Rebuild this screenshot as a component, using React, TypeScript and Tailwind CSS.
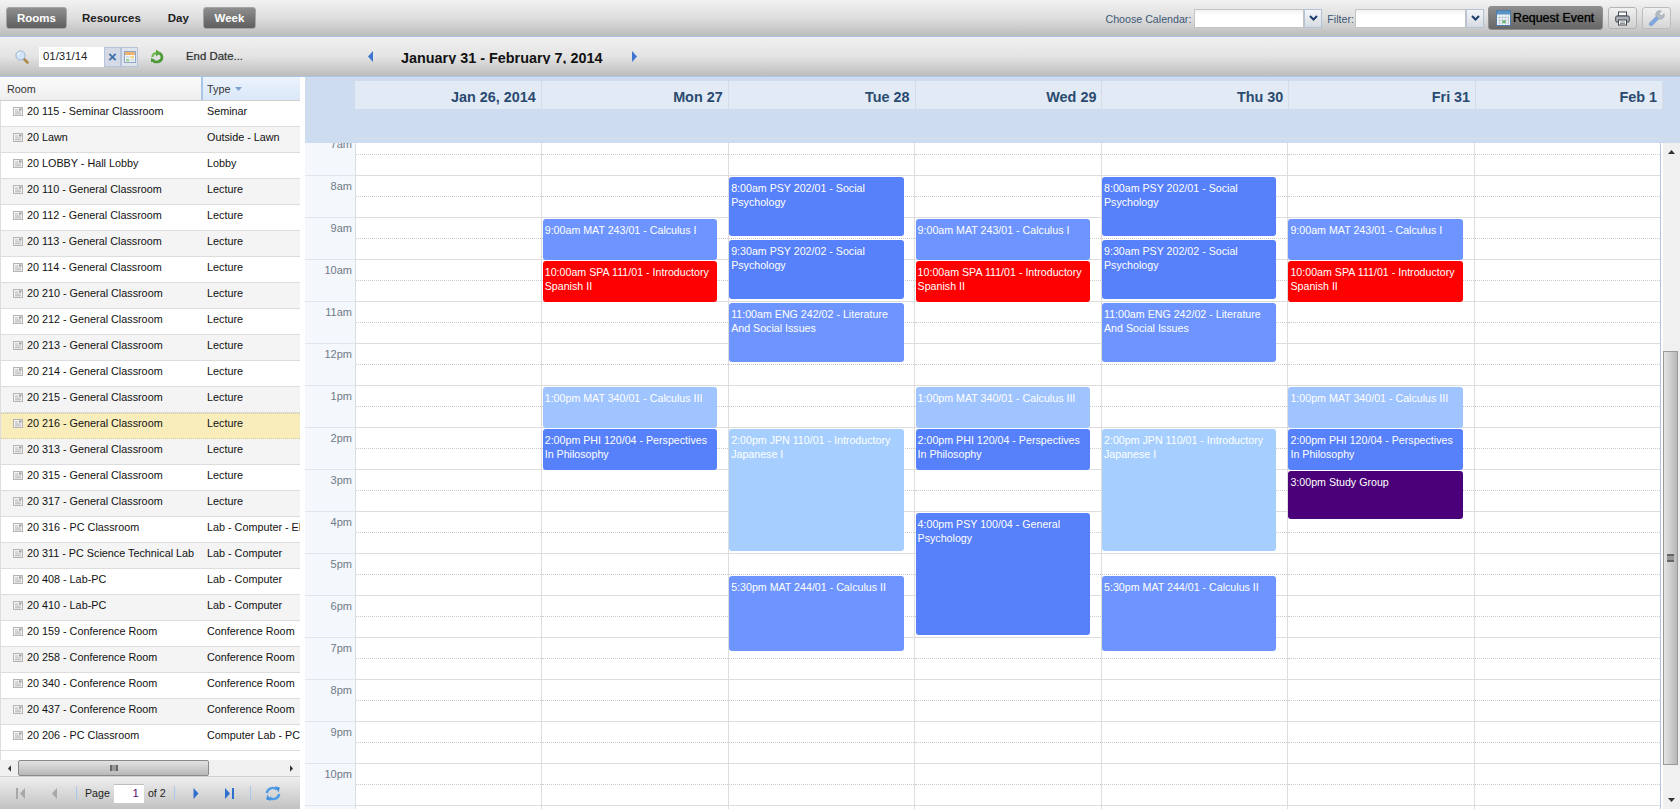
import React from "react";

type Tone = "mid" | "blue" | "red" | "sky" | "pale" | "purple";

type CalEvent = {
  start: number;
  end: number;
  label: string;
  tone: Tone;
};

const toneClass: Record<Tone, string> = {
  mid: "bg-[#6e95ff]",
  blue: "bg-[#5780fb]",
  red: "bg-[#ff0000]",
  sky: "bg-[#a0c4ff]",
  pale: "bg-[#a6cfff]",
  purple: "bg-[#4a0078]",
};

const rooms: [string, string][] = [
  ["20 115 - Seminar Classroom", "Seminar"],
  ["20 Lawn", "Outside - Lawn"],
  ["20 LOBBY - Hall Lobby", "Lobby"],
  ["20 110 - General Classroom", "Lecture"],
  ["20 112 - General Classroom", "Lecture"],
  ["20 113 - General Classroom", "Lecture"],
  ["20 114 - General Classroom", "Lecture"],
  ["20 210 - General Classroom", "Lecture"],
  ["20 212 - General Classroom", "Lecture"],
  ["20 213 - General Classroom", "Lecture"],
  ["20 214 - General Classroom", "Lecture"],
  ["20 215 - General Classroom", "Lecture"],
  ["20 216 - General Classroom", "Lecture"],
  ["20 313 - General Classroom", "Lecture"],
  ["20 315 - General Classroom", "Lecture"],
  ["20 317 - General Classroom", "Lecture"],
  ["20 316 - PC Classroom", "Lab - Computer - EN"],
  ["20 311 - PC Science Technical Lab", "Lab - Computer"],
  ["20 408 - Lab-PC", "Lab - Computer"],
  ["20 410 - Lab-PC", "Lab - Computer"],
  ["20 159 - Conference Room", "Conference Room"],
  ["20 258 - Conference Room", "Conference Room"],
  ["20 340 - Conference Room", "Conference Room"],
  ["20 437 - Conference Room", "Conference Room"],
  ["20 206 - PC Classroom", "Computer Lab - PC"],
];

const hours = ["7am", "8am", "9am", "10am", "11am", "12pm", "1pm", "2pm", "3pm", "4pm", "5pm", "6pm", "7pm", "8pm", "9pm", "10pm", "11pm"];
const dayHeads = ["Jan 26, 2014", "Mon 27", "Tue 28", "Wed 29", "Thu 30", "Fri 31", "Feb 1"];

// pixel tops/bottoms are relative to the first grid row (7am)
const calc1: CalEvent = { start: 85, end: 126, label: "9:00am MAT 243/01 - Calculus I", tone: "mid" };
const spa: CalEvent = { start: 127, end: 168, label: "10:00am SPA 111/01 - Introductory Spanish II", tone: "red" };
const calc3: CalEvent = { start: 253, end: 294, label: "1:00pm MAT 340/01 - Calculus III", tone: "sky" };
const phi: CalEvent = { start: 295, end: 336, label: "2:00pm PHI 120/04 - Perspectives In Philosophy", tone: "blue" };

const tueThu: CalEvent[] = [
  { start: 43, end: 102, label: "8:00am PSY 202/01 - Social Psychology", tone: "blue" },
  { start: 106, end: 165, label: "9:30am PSY 202/02 - Social Psychology", tone: "blue" },
  { start: 169, end: 228, label: "11:00am ENG 242/02 - Literature And Social Issues", tone: "mid" },
  { start: 295, end: 417, label: "2:00pm JPN 110/01 - Introductory Japanese I", tone: "pale" },
  { start: 442, end: 517, label: "5:30pm MAT 244/01 - Calculus II", tone: "mid" },
];

const dayEvents: CalEvent[][] = [
  [],
  [calc1, spa, calc3, phi],
  tueThu,
  [calc1, spa, calc3, phi, { start: 379, end: 501, label: "4:00pm PSY 100/04 - General Psychology", tone: "blue" }],
  tueThu,
  [calc1, spa, calc3, phi, { start: 337, end: 385, label: "3:00pm Study Group", tone: "purple" }],
  [],
];

function SearchIcon() {
  return (
    <svg width="14" height="14" viewBox="0 0 14 14">
      <path d="M8.500 8.500l4 4" stroke="#b08a4c" strokeWidth="2.600" strokeLinecap="round" />
      <circle cx="5.500" cy="5.500" r="4.600" fill="#d3e4f8" stroke="#9db4d0" />
      <path d="M2.800 5a3 3 0 0 1 2.500-2.400" stroke="#fff" fill="none" />
    </svg>
  );
}

function CalendarSmall() {
  return (
    <svg width="12" height="12" viewBox="0 0 12 12">
      <rect x="0.500" y="0.500" width="11" height="11" fill="#f6f8fb" stroke="#8aa6c8" />
      <rect x="1" y="1" width="10" height="3" fill="#f0b26a" />
      <rect x="2" y="5" width="3.500" height="2.500" fill="#d4dfeb" />
      <rect x="6.500" y="5" width="3.500" height="2.500" fill="#f2d58a" />
      <rect x="2" y="8" width="3.500" height="2.500" fill="#a8d296" />
      <rect x="6.500" y="8" width="3.500" height="2.500" fill="#d4dfeb" />
    </svg>
  );
}

function RefreshGreen() {
  return (
    <svg width="14" height="15" viewBox="0 0 14 15" fill="none">
      <path d="M2.400 10.500A5.200 5.200 0 0 0 12 8.500 5 5 0 0 0 9 4" stroke="#4c9a38" strokeWidth="2.600" />
      <path d="M2.500 8a4 4 0 0 1 4-4" stroke="#76bb58" strokeWidth="2.400" />
      <path d="M6 0.500l5 3.500-5 3.500z" fill="#5aa842" />
      <path d="M1 13.500l3-3-3-1.500z" fill="#4c9a38" />
    </svg>
  );
}

function RequestIcon() {
  return (
    <svg width="15" height="16" viewBox="0 0 15 16">
      <rect x="0.500" y="0.500" width="14" height="15" fill="#eef3f7" stroke="#4f7ba6" />
      <rect x="1" y="1" width="13" height="3.500" fill="#5b93c6" />
      <path d="M3.500 5.500v9M6.500 5.500v9M9.500 5.500v9M12.500 5.500v9M2 7.500h11M2 10.500h11M2 13h11" stroke="#bcc6d0" strokeWidth="0.800" />
      <rect x="6.500" y="10.500" width="3" height="2.500" fill="#58b858" />
    </svg>
  );
}

function PrinterIcon() {
  return (
    <svg width="15" height="15" viewBox="0 0 15 15" fill="none">
      <rect x="3.500" y="1" width="8" height="4" fill="#fff" stroke="#3f4750" />
      <rect x="0.700" y="5" width="13.600" height="6" rx="1.200" fill="#aab0b6" stroke="#3f4750" />
      <rect x="3.500" y="9" width="8" height="5" fill="#fff" stroke="#3f4750" />
      <path d="M5 11h5M5 12.500h5" stroke="#8a8f95" />
    </svg>
  );
}

function WrenchIcon() {
  return (
    <svg width="17" height="17" viewBox="0 0 17 17">
      <path d="M8.800 5.800L1.600 13a1.800 1.800 0 0 0 2.500 2.500l7.200-7.200z" fill="#7fa8e0" stroke="#6f93c4" strokeWidth="0.600" />
      <path d="M8.200 6.500A4 4 0 0 1 13.500 1L11.200 3.300l.6 2 2 .6L16 3.600a4 4 0 0 1-5.400 5.200z" fill="#b4bcc6" stroke="#98a2ae" strokeWidth="0.600" />
    </svg>
  );
}

function RefreshBlue() {
  return (
    <svg width="16" height="15" viewBox="0 0 16 15" fill="none">
      <path d="M1.800 7A5.800 5.800 0 0 1 11.500 3.500" stroke="#4c9ce8" strokeWidth="2.400" />
      <path d="M9.800 0.300l5 1.200-1.200 5z" fill="#3f8fe0" />
      <path d="M14.200 8A5.800 5.800 0 0 1 4.500 11.500" stroke="#4c9ce8" strokeWidth="2.400" />
      <path d="M6.200 14.700l-5-1.200 1.200-5z" fill="#3f8fe0" />
    </svg>
  );
}

function RoomIcon() {
  return (
    <svg width="10" height="9" viewBox="0 0 10 9" className="shrink-0">
      <rect x="0.500" y="0.500" width="9" height="8" fill="#f4f4f4" stroke="#b4b4b4" />
      <path d="M2 3h3M2 5h6M2 6.800h6" stroke="#b4b4b4" />
      <rect x="6" y="1.500" width="2.500" height="2" fill="#9a9a9a" />
    </svg>
  );
}

function Tri({ dir, color, w = 5, h = 11 }: { dir: "l" | "r"; color: string; w?: number; h?: number }) {
  return (
    <svg width={w} height={h} viewBox="0 0 5 11">
      <path d={dir === "l" ? "M5 0v11L0 5.500z" : "M0 0v11l5-5.500z"} fill={color} />
    </svg>
  );
}

function ComboBox({ width }: { width: string }) {
  return (
    <div className="flex h-[19px]">
      <div className={`${width} border border-[#c4c4c4] bg-gradient-to-b from-[#f1f1f1] to-white to-30%`} />
      <div className="flex w-[18px] items-center justify-center border border-[#b4c2d6] bg-gradient-to-b from-[#f4f6f9] to-[#d6dbe2]">
        <svg width="9" height="6" viewBox="0 0 9 6">
          <path d="M1 1l3.500 3.500L8 1" stroke="#1c3f6e" strokeWidth="2" fill="none" />
        </svg>
      </div>
    </div>
  );
}

function TopBar() {
  return (
    <div className="flex h-[37px] items-center border-b border-[#a9c4e8] bg-gradient-to-b from-[#f2f2f2] via-[#dedede] to-[#bcbcbc] pl-[6px] pr-[9px] text-[11.5px]">
      <button className="h-[22px] w-[61px] rounded-[3px] border border-[#a4a4a4] bg-gradient-to-b from-[#8e8e8e] to-[#5f5f5f] pt-px font-bold text-white">Rooms</button>
      <span className="ml-[15px] pt-px font-bold text-[#222]">Resources</span>
      <span className="ml-[27px] pt-px font-bold text-[#222]">Day</span>
      <button className="ml-[14px] h-[22px] w-[53px] rounded-[3px] border border-[#a4a4a4] bg-gradient-to-b from-[#8e8e8e] to-[#5f5f5f] pt-px font-bold text-white">Week</button>
      <div className="flex-1" />
      <span className="pt-px text-[10.67px] text-[#3d5875]">Choose Calendar:</span>
      <div className="ml-[3px]"><ComboBox width="w-[110px]" /></div>
      <span className="ml-[5px] pt-px text-[10.67px] text-[#3d5875]">Filter:</span>
      <div className="ml-[1px]"><ComboBox width="w-[111px]" /></div>
      <button className="ml-[4px] flex h-[24px] w-[115px] items-center gap-[2px] rounded-[3px] border border-[#8d8d8d] bg-gradient-to-b from-[#8e8e8e] to-[#666] pl-[7px] text-[12.4px] text-black [text-shadow:0_0_1px_rgba(0,0,0,0.7)]">
        <RequestIcon />
        Request Event
      </button>
      <button className="ml-[5px] flex h-[22px] w-[29px] items-center justify-center rounded-[3px] border border-[#b4b4b4] bg-gradient-to-b from-[#f0f0f0] to-[#d0d0d0]">
        <PrinterIcon />
      </button>
      <button className="ml-[5px] flex h-[22px] w-[29px] items-center justify-center rounded-[3px] border border-[#bcbcbc] bg-gradient-to-b from-[#f0f0f0] to-[#d6d6d6]">
        <WrenchIcon />
      </button>
    </div>
  );
}

function DateBar() {
  return (
    <div className="flex h-[40px] items-center border-b border-[#a9c4e8] bg-gradient-to-b from-[#f0f0f0] via-[#e4e4e4] to-[#bcbcbc] pl-[15px] text-[11px]">
      <SearchIcon />
      <div className="ml-[10px] flex h-[20px]">
        <div className="flex w-[65px] items-center bg-white pl-[4px] text-[11.4px] text-[#222]">01/31/14</div>
        <div className="flex w-[17px] items-center justify-center border border-[#b6c4da] bg-[#d4dbe6] text-[15px] font-bold leading-none text-[#3a6ea8]">×</div>
        <div className="flex w-[17px] items-center justify-center border border-[#b6c4da] bg-[#dfe4ec]"><CalendarSmall /></div>
      </div>
      <div className="ml-[12px]"><RefreshGreen /></div>
      <span className="ml-[22px] pt-px text-[11.4px] text-[#333] [text-shadow:0_0_1px_rgba(0,0,0,0.4)]">End Date...</span>
      <div className="ml-[125px]"><Tri dir="l" color="#3f74d0" /></div>
      <div className="ml-[28px] h-[15px] overflow-hidden text-[14.4px] font-bold leading-[19px] text-[#111]">January 31 - February 7, 2014</div>
      <div className="ml-[29px]"><Tri dir="r" color="#3f74d0" /></div>
    </div>
  );
}

function RoomList() {
  return (
    <div className="flex w-[300px] shrink-0 flex-col bg-white text-[10.8px] text-[#111]">
      <div className="flex h-[24px] shrink-0 border-b border-[#cfcfcf]">
        <div className="flex w-[201px] items-center bg-gradient-to-b from-[#fbfbfb] to-[#eeeeee] pl-[7px] pt-px text-[#333]">Room</div>
        <div className="flex flex-1 items-center gap-[5px] border-l-2 border-[#a9c5e8] bg-gradient-to-b from-[#ebf3fd] to-[#dbe8f9] pl-[4px] pt-px text-[#333]">
          Type
          <svg width="7" height="4" viewBox="0 0 7 4">
            <path d="M0 0h7L3.500 4z" fill="#7da2d1" />
          </svg>
        </div>
      </div>
      <div className="flex-1 overflow-hidden border-l border-[#dddddd]">
        {rooms.map(([name, type], i) => (
          <div
            key={name}
            className={`flex h-[26px] items-center ${i === 12 ? "border-y border-dotted border-[#cfc9a0] bg-[#f8edbb] pb-[5px]" : i % 2 === 1 ? "border-b border-[#dddddd] bg-[#f4f4f4] pb-[4px]" : "border-b border-[#dddddd] bg-white pb-[4px]"}`}
          >
            <div className="flex w-[206px] shrink-0 items-center gap-[4px] pl-[12px]">
              <RoomIcon />
              <span className="whitespace-nowrap">{name}</span>
            </div>
            <span className="overflow-hidden whitespace-nowrap pr-[3px]">{type}</span>
          </div>
        ))}
      </div>
      <div className="flex h-[16px] shrink-0 items-center bg-[#f0f0f0]">
        <div className="flex w-[18px] justify-center"><Tri dir="l" color="#333" w={3} h={7} /></div>
        <div className="flex h-[16px] w-[191px] items-center justify-center rounded-[2px] border border-[#8a8a8a] bg-gradient-to-b from-[#e2e2e2] to-[#b8b8b8]">
          <div className="h-[6px] w-[8px] border-x-2 border-[#666] bg-[#999]" />
        </div>
        <div className="flex-1" />
        <div className="mr-[7px]"><Tri dir="r" color="#333" w={3} h={7} /></div>
      </div>
      <div className="flex h-[33px] shrink-0 items-center border-t border-[#d0d0d0] bg-gradient-to-b from-[#efefef] to-[#c2c2c2] text-[10.67px] text-[#222]">
        <div className="ml-[16px] flex items-center">
          <div className="mr-px h-[11px] w-[2px] bg-[#a8a8a8]" />
          <Tri dir="l" color="#a8a8a8" w={7} h={11} />
        </div>
        <div className="ml-[26px]"><Tri dir="l" color="#a8a8a8" w={5} h={11} /></div>
        <div className="ml-[19px] h-[14px] w-px bg-[#a9c8ee]" />
        <span className="ml-[8px]">Page</span>
        <div className="ml-[4px] flex h-[19px] w-[30px] items-center justify-end border-t border-[#bdbdbd] bg-white pr-[5px] text-[11.4px] text-[#5c0a6e]">1</div>
        <span className="ml-[4px]">of 2</span>
        <div className="ml-[8px] h-[14px] w-px bg-[#a9c8ee]" />
        <div className="ml-[18px]"><Tri dir="r" color="#2f6fd0" w={6} h={11} /></div>
        <div className="ml-[25px] flex items-center">
          <Tri dir="r" color="#2f6fd0" w={7} h={11} />
          <div className="ml-px h-[11px] w-[2px] bg-[#2f6fd0]" />
        </div>
        <div className="ml-[16px] h-[14px] w-px bg-[#a9c8ee]" />
        <div className="ml-[14px]"><RefreshBlue /></div>
      </div>
    </div>
  );
}

function DayColumn({ events }: { events: CalEvent[] }) {
  return (
    <div className="relative border-l border-[#dddddd]">
      {hours.map((h) => (
        <div key={h} className="h-[42px] border-b border-[#dddddd]">
          <div className="h-[21px] border-b border-dotted border-[#cccccc]" />
        </div>
      ))}
      {events.map((ev) => (
        <div
          key={ev.label}
          className={`absolute left-[0.3px] right-[10.7px] overflow-hidden rounded-[3px] px-[2px] py-[4px] text-[10.67px] leading-[14px] text-white ${toneClass[ev.tone]}`}
          style={{ top: ev.start, height: ev.end - ev.start }}
        >
          {ev.label}
        </div>
      ))}
    </div>
  );
}

function Calendar() {
  return (
    <div className="ml-[5px] flex min-w-0 flex-1 flex-col">
      <div className="flex h-[66px] shrink-0 flex-col bg-[#cddcee]">
        <div className="mt-[4px] ml-[50px] grid h-[27px] w-[1308px] grid-cols-7">
          {dayHeads.map((d) => (
            <div key={d} className="flex items-center justify-end border-r border-[#d5dce6] bg-[#e2eaf5] pr-[5px] pt-[6px] text-[14.4px] font-bold text-[#2a4a70]">
              {d}
            </div>
          ))}
        </div>
        <div className="mt-[30px] ml-[50px] h-px w-[1306px] bg-[#d8dfe8]" />
      </div>
      <div className="flex min-h-0 flex-1">
        <div className="min-w-0 flex-1 overflow-hidden">
          <div className="-mt-[9px] flex">
            <div className="w-[50px] shrink-0 bg-[#f4f7fb]">
              {hours.map((h) => (
                <div key={h} className="h-[42px] border-b border-[#e2e6ec] pr-[3px] pt-[3px] text-right text-[11px] leading-[14px] text-[#707a88]">
                  {h}
                </div>
              ))}
            </div>
            <div className="grid w-[1306px] grid-cols-7 border-r border-[#b4c4e6]">
              {dayEvents.map((events, i) => (
                <DayColumn key={i} events={events} />
              ))}
            </div>
          </div>
        </div>
        <div className="relative ml-[1px] flex w-[17px] shrink-0 flex-col bg-[#f0f0f0]">
          <svg width="7" height="4" viewBox="0 0 7 4" className="absolute left-[5px] top-[7px]">
            <path d="M3.500 0L7 4H0z" fill="#333" />
          </svg>
          <div className="absolute left-0 top-[208px] flex h-[414px] w-[15px] items-center justify-center border border-[#9a9a9a] bg-gradient-to-r from-[#e4e4e4] to-[#b8b8b8]">
            <div className="h-[8px] w-[7px] border-y-2 border-[#666] bg-[#999]" />
          </div>
          <svg width="7" height="4" viewBox="0 0 7 4" className="absolute left-[5px] bottom-[7px]">
            <path d="M0 0h7L3.500 4z" fill="#333" />
          </svg>
        </div>
      </div>
    </div>
  );
}

export default function App() {
  return (
    <div className="flex h-[809px] w-[1680px] flex-col overflow-hidden bg-white font-['Liberation_Sans',Arial,sans-serif]">
      <TopBar />
      <DateBar />
      <div className="flex min-h-0 flex-1">
        <RoomList />
        <Calendar />
      </div>
    </div>
  );
}
